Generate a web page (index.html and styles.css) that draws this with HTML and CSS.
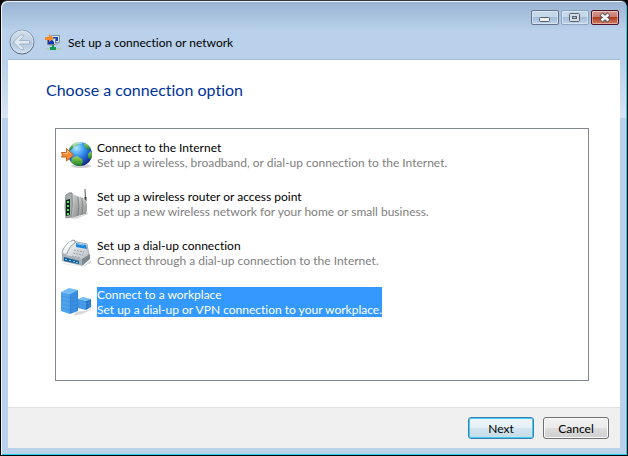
FILE: index.html
```html
<!DOCTYPE html>
<html lang="en">
<head>
    <meta charset="UTF-8">
    <meta name="viewport" content="width=device-width, initial-scale=1.0">
    <title>Set up a connection or network</title>
    <link rel="stylesheet" href="styles.css">
</head>
<body>
<div class="window">
    <!-- Window controls -->
    <div class="controls">
        <button type="button" class="control" aria-label="Minimize">
            <svg width="26" height="13" viewBox="0 0 26 13"><rect x="7.5" y="6.5" width="10" height="4" rx="1" fill="#f2f0ec" stroke="#55606f"/></svg>
        </button>
        <button type="button" class="control control-max" aria-label="Maximize" disabled>
            <svg width="26" height="13" viewBox="0 0 26 13"><rect x="7.5" y="2.5" width="10" height="8" rx="1" fill="#d8dce0" stroke="#566273"/><rect x="10.5" y="5.5" width="4" height="2" fill="#a9c0da" stroke="#566273"/></svg>
        </button>
        <button type="button" class="control control-close" aria-label="Close">
            <svg width="26" height="13" viewBox="0 0 26 13"><path d="M9 3l8 7M17 3l-8 7" stroke="#5d5260" stroke-width="4.500"/><path d="M9.500 3.500l7 6M16.500 3.500l-7 6" stroke="#f8f6f6" stroke-width="2.500"/></svg>
        </button>
    </div>

    <header class="header">
        <button type="button" class="back" aria-label="Back" disabled>
            <svg width="26" height="26" viewBox="0 0 26 26">
                <defs>
                    <linearGradient id="disc" x1="0" y1="0" x2="0" y2="1"><stop offset="0" stop-color="#d3dfec"/><stop offset=".48" stop-color="#c0d1e2"/><stop offset=".52" stop-color="#b0c6dd"/><stop offset="1" stop-color="#cfe0f2"/></linearGradient>
                    <linearGradient id="ring" x1="0" y1="0" x2="0" y2="1"><stop offset="0" stop-color="#8ba0b8"/><stop offset="1" stop-color="#4d5a6b"/></linearGradient>
                </defs>
                <circle cx="13" cy="13" r="12" fill="url(#disc)" stroke="url(#ring)"/>
                <circle cx="13" cy="13" r="11" fill="none" stroke="#e2edf8" stroke-opacity=".6"/>
                <path d="M4.500 13l7-7h3v1.500l-4 4h10v3.500h-10l4 4v1.500h-3z" fill="#dfe9f3" stroke="#a3b5c8" stroke-linejoin="round"/>
            </svg>
        </button>
        <svg class="app-icon" width="16" height="17" viewBox="0 0 16 17">
            <path d="M6.500 1.500h8v7h-8z" fill="#dbe3ec" stroke="#8191a5"/>
            <path d="M8 3h5v4H8z" fill="#1741ba"/>
            <path d="M2.500 4.500h8v6h-8z" fill="#dce5f0" stroke="#6f8097"/>
            <path d="M3 5h6v5H3z" fill="#1033b4"/>
            <path d="M6 5h3v3z" fill="#a8cff8"/>
            <path d="M10 9h3v2h-3zM4 11h4v1H4z" fill="#a7b1bd"/>
            <path d="M0 3h4V0l5 4.500L4 8V6H0z" fill="#f28a2c"/>
            <path d="M7 11h2v2h2v3H5v-3h2z" fill="#159a54"/>
            <path d="M0 14h5v2H0zM11 14h5v2h-5z" fill="#b3cdc0"/>
        </svg>
        <span class="title">Set up a connection or network</span>
    </header>

    <form class="page">
        <main class="content">
            <h1 class="heading" id="heading">Choose a connection option</h1>

            <!-- Connection options -->
            <div class="options" role="radiogroup" aria-labelledby="heading">
                <label class="option">
                    <input class="choice" type="radio" name="connection" value="internet">
                    <svg class="icon" width="32" height="32" viewBox="0 0 32 32">
                        <defs>
                            <radialGradient id="globe" cx=".35" cy=".25" r=".8"><stop offset="0" stop-color="#b4e8ff"/><stop offset=".4" stop-color="#3a9af0"/><stop offset=".75" stop-color="#1b4fc0"/><stop offset="1" stop-color="#0b267c"/></radialGradient>
                            <linearGradient id="land" x1="0" y1="0" x2="0" y2="1"><stop offset="0" stop-color="#a0d95c"/><stop offset="1" stop-color="#177e23"/></linearGradient>
                        </defs>
                        <ellipse cx="21" cy="27" rx="10" ry="2" fill="#000" opacity=".18"/>
                        <circle cx="20" cy="15" r="12" fill="url(#globe)"/>
                        <path d="M10 9q2-4 7-6l2 1-1 2-4 1-2 3-3 2z" fill="url(#land)"/>
                        <path d="M25 4q4 2 5 6l-2 1-3-3-1-2z" fill="url(#land)"/>
                        <path d="M31 12q2 4 0 8l-3-1v-4l2-2z" fill="url(#land)"/>
                        <path d="M12 19l5-2 5 3 1 3-2 4q-6 0-10-4z" fill="url(#land)"/>
                        <path d="M13 7q4-4 9-3" fill="none" stroke="#e2f8ff" stroke-width="2" opacity=".5"/>
                        <path d="M1.500 13.500h5v-4l7 6.500-7 6v-4h-5l1-2z" fill="#f58a35" stroke="#c9631f"/>
                        <path d="M3 14.500h4.500v-3l3 3" fill="none" stroke="#ffc083"/>
                    </svg>
                    <span class="text">
                        <span class="name">Connect to the Internet</span>
                        <span class="info">Set up a wireless, broadband, or dial-up connection to the Internet.</span>
                    </span>
                </label>

                <label class="option">
                    <input class="choice" type="radio" name="connection" value="router">
                    <svg class="icon" width="32" height="32" viewBox="0 0 32 32">
                        <defs>
                            <linearGradient id="shell" x1="0" y1="0" x2="1" y2="1"><stop offset="0" stop-color="#e4e5e5"/><stop offset="1" stop-color="#858888"/></linearGradient>
                        </defs>
                        <path d="M8 30l16-3 4-3v2l-12 5z" opacity=".15"/>
                        <path d="M25.500 12L25 1" stroke="#55595b" fill="none"/>
                        <path d="M25.500 9v4" stroke="#383b3d" stroke-width="2"/>
                        <path d="M20 8l6 4q2 7 0 14l-5 1z" fill="url(#shell)"/>
                        <path d="M16 7l6 3q2 9 0 17l-5 1z" fill="url(#shell)"/>
                        <path d="M10 4l8 5q2 10 0 19l-7 2z" fill="url(#shell)"/>
                        <path d="M18 9q2 10 0 19M22 10q2 9 0 17" stroke="#6f7374" fill="none" opacity=".6"/>
                        <path d="M6 7q3-3 6-2 1 12-1 24l-5 1q-2-11 0-23z" fill="#a9adae" stroke="#888c8d"/>
                        <path d="M6 12l4-1v16l-4 1z" fill="#162118"/>
                        <path d="M7 14h2M7 18h2M7 22h2M7 26h2" stroke="#3cf060" stroke-width="2"/>
                    </svg>
                    <span class="text">
                        <span class="name">Set up a wireless router or access point</span>
                        <span class="info">Set up a new wireless network for your home or small business.</span>
                    </span>
                </label>

                <label class="option">
                    <input class="choice" type="radio" name="connection" value="dialup">
                    <svg class="icon" width="32" height="32" viewBox="0 0 32 32">
                        <defs>
                            <linearGradient id="phone" x1="0" y1="0" x2="1" y2="1"><stop offset="0" stop-color="#fff"/><stop offset="1" stop-color="#b4bbc0"/></linearGradient>
                        </defs>
                        <path d="M3 26l19 4 9-7v3l-9 4-18-3z" opacity=".15"/>
                        <path d="M12 4l15 3 2 12-7 5-19-4 1-7z" fill="url(#phone)" stroke="#a0a8ae"/>
                        <path d="M22 22l8-5v5l-8 7z" fill="#7d878e"/>
                        <path d="M2 17l20 5v7L2 24z" fill="#a5b1ba"/>
                        <path d="M4 20l15 4v3L4 24z" fill="#185b91"/>
                        <path d="M6 22v1M10 23v1M14 24v1M17 25v1" stroke="#5cd6ff" stroke-width="2"/>
                        <path d="M16 6l10 2 1 4-11-2z" fill="#2186da"/>
                        <path d="M17 7l7 1" stroke="#77caff"/>
                        <path d="M14 13l10 2M13 16l10 2M12 19l9 2" stroke="#98a1a8" stroke-dasharray="2 1"/>
                        <path d="M13 3q3 0 2 3l-4 3-3 5-1 3q-3 1-5-1l1-4 5-6z" fill="#eef0f1" stroke="#98a1a8"/>
                        <path d="M11 5l-6 7" stroke="#fff" stroke-width="2"/>
                    </svg>
                    <span class="text">
                        <span class="name">Set up a dial-up connection</span>
                        <span class="info">Connect through a dial-up connection to the Internet.</span>
                    </span>
                </label>

                <label class="option">
                    <input class="choice" type="radio" name="connection" value="workplace" checked>
                    <svg class="icon" width="32" height="32" viewBox="0 0 32 32">
                        <path d="M16 26l13-2 2-2v2l-9 4-9 2z" opacity=".15"/>
                        <path d="M1 6l8-4 9 2-8 4z" fill="#6fbcf8"/>
                        <path d="M1 6l9 2v20l-9-3z" fill="#4aa0ea"/>
                        <path d="M10 8l8-4v21l-8 3z" fill="#3389dc"/>
                        <path d="M3 7v18M5 7v19M7 8v19" stroke="#62b2f5" opacity=".4"/>
                        <path d="M12 8v19M14 7v19M16 6v19" stroke="#5cabf2" opacity=".4"/>
                        <path d="M1 10l9 2 8-2M1 14l9 2 8-2M1 18l9 2 8-1M1 22l9 2 8-2" stroke="#1d69ba" fill="none" opacity=".2"/>
                        <path d="M18 13l5-2 8 2-5 2z" fill="#74bdf6"/>
                        <path d="M18 13l8 2v9l-8-2z" fill="#3e93e2"/>
                        <path d="M26 15l5-2v8l-5 3z" fill="#2372c4"/>
                        <path d="M18 16l8 2 5-2M18 19l8 2 5-2M21 14v9M24 15v9M29 14v8" stroke="#68b4f2" fill="none" opacity=".3"/>
                    </svg>
                    <span class="text">
                        <span class="name">Connect to a workplace</span>
                        <span class="info">Set up a dial-up or VPN connection to your workplace.</span>
                    </span>
                </label>
            </div>
        </main>

        <footer class="footer">
            <button type="button" class="button button-default">Next</button>
            <button type="button" class="button">Cancel</button>
        </footer>
    </form>
</div>
</body>
</html>
```
FILE: styles.css
```css
* {
    box-sizing: border-box;
}

body {
    margin: 0;
    background-color: #000;
    font-family: Lato, "Open Sans", sans-serif;
    font-size: 12px;
    font-variant-ligatures: none;
    line-height: 15px;
    color: #000;
}

/* Glass frame */
.window {
    display: flex;
    flex-direction: column;
    min-height: 100vh;
    padding: 0 6px 6px;
    border: 1px solid #000;
    border-top-color: #35323a;
    border-radius: 7px 7px 0 0;
    background: linear-gradient(#98b3d2, #b9d1ea 30px, #b9d1ea 60px, #d6e4f5 117px, #b9d1ea 117px);
    box-shadow: inset 1px 1px 0 #eef5fc, inset -1px -1px 0 #19d4ee;
}

.controls {
    display: flex;
    justify-content: flex-end;
    gap: 2px;
    padding: 9px 2px 0 0;
}

.control {
    width: 28px;
    height: 15px;
    padding: 0;
    border: 1px solid #63758d;
    border-radius: 2px;
    background: linear-gradient(#c5d7ea 50%, #a4bdd9 50%, #bfd5ec);
    box-shadow: inset 0 0 0 1px rgba(255, 255, 255, 0.4);
}

.control svg {
    display: block;
}

.control-max {
    border-color: #8ba4c1;
}

.control-close {
    border-color: #49142b;
    background: linear-gradient(#d99a91, #c8786b 50%, #ae3e1d 50%, #d37c67);
}

.header {
    display: flex;
    align-items: center;
    height: 34px;
    padding-left: 2px;
}

.back {
    width: 26px;
    height: 26px;
    padding: 0;
    border: none;
    background: none;
}

.back svg {
    display: block;
}

.app-icon {
    margin: 0 7px 0 10px;
}

/* Wizard page */
.page {
    display: flex;
    flex: 1;
    flex-direction: column;
    margin: 0 1px 1px;
    border-top: 1px solid #a5bdd5;
    background-color: #fff;
}

.content {
    display: flex;
    flex: 1;
    flex-direction: column;
    padding: 19px 31px 26px 38px;
}

.heading {
    margin: 0;
    font-size: 16px;
    font-weight: normal;
    line-height: 22px;
    color: #003399;
}

.options {
    display: flex;
    flex: 1;
    flex-direction: column;
    gap: 17px;
    margin: 27px 0 0 9px;
    padding: 10px 4px;
    border: 1px solid #828790;
}

.option {
    display: flex;
    align-items: center;
}

.choice {
    width: 0;
    height: 0;
    margin: 0;
    appearance: none;
    outline: none;
}

.icon {
    flex: none;
    margin-right: 5px;
}

.name,
.info {
    display: block;
}

.info {
    color: #808080;
}

.choice:checked ~ .text,
.choice:checked ~ .text .info {
    background-color: #3399ff;
    color: #fff;
}

.footer {
    display: flex;
    justify-content: flex-end;
    gap: 9px;
    padding: 9px 11px;
    border-top: 1px solid #dfdfdf;
    background-color: #f0f0f0;
}

.button {
    width: 66px;
    height: 22px;
    padding: 0;
    border: 1px solid #707070;
    border-radius: 3px;
    background: linear-gradient(#f2f2f2, #ebebeb 50%, #dddddd 50%, #cfcfcf);
    box-shadow: inset 0 0 0 1px #fbfbfb;
    font: inherit;
    color: #000;
}

.button-default {
    border-color: #3c7fb1;
    background: linear-gradient(#eef5f9, #e4eff6 50%, #d2e4ef 50%, #c5dce9);
    box-shadow: inset 0 0 0 1px #3fcdf3;
}
```
